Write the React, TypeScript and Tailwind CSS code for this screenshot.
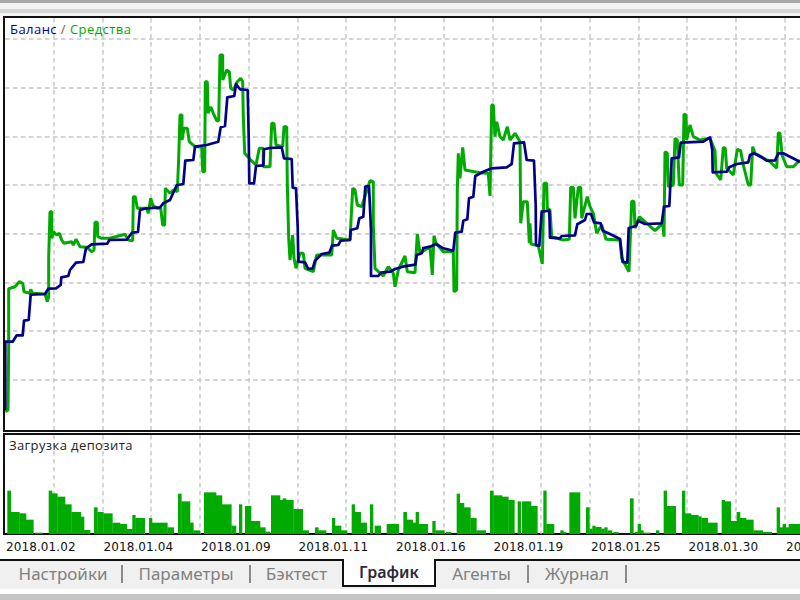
const hLines = [39, 88, 137, 185, 234, 283, 331, 380];
const vLines = [54, 103, 151, 200, 249, 298, 346, 395, 444, 493, 541, 590, 639, 687, 736, 785];

type Seg = [number, number, number[]];
// zoom-crop coordinates (3x) with their crop offset
const blueSegs: Seg[] = [
  [0, 190, [16,660,16,455,38,455,50,436,68,436,72,392,86,390,92,314,135,312,145,296,168,295,182,285,184,262,205,258,210,240,228,218,250,216,258,175,275,163,322,161,328,150,380,149,396,128,414,126,420,60,440,55,480,52,490,40,510,30]],
  [0, 0, [530,556,550,552,556,482,580,480,585,440,620,435,655,425,662,382,675,378,682,292,703,288,708,252,720,268,743,270,746,410,748,550,762,550,768,498,790,496,792,448]],
  [270, 90, [0,174,35,172,42,205,65,207,68,293,78,295,83,410,85,515,105,517,115,537,128,535,135,512,155,492,178,488,186,467,205,465,212,452,240,450,242,420,262,415,268,385,280,380,286,290,297,288,303,420,303,558,325,558,333,548,360,545,375,537,398,530,436,524,440,495,455,490,460,474,480,470,498,462,520,475,550,482,556,428,575,425,580,392,592,388,597,325,610,320,616,258,640,245,665,235,710,232,725,222,732,160,762,157,770,210,792,212,797,345,798,465]],
  [530, 90, [28,467,35,365,58,362,60,443,90,445,95,438,135,436,142,403,165,390,170,372,183,372,192,397,212,400,218,422,240,432,270,447,278,516,292,518,296,414,318,408,325,392,345,402,395,400,402,350,418,348,425,205,447,202,452,158,520,155,540,142,547,180,548,247,590,245,598,232,620,222,655,217,660,195,672,190,700,205,710,212,735,211,745,190,760,190,780,200,795,208,810,216]],
];
const greenSegs: Seg[] = [
  [0, 190, [16,665,24,660,26,470,26,296,45,290,58,275,68,280,72,305,90,310,92,298,98,310,135,312,142,335,146,320,146,200,150,65,155,65,155,145,160,125,170,135,178,130,185,150,192,160,215,155,220,165,228,148,240,170,260,172,275,185,282,180,285,97,292,97,293,140,305,145,330,145,375,133,385,150,398,152,400,20,406,20,412,55,440,55,445,70,452,25,458,45,470,55,482,55,488,105,494,105,496,0]],
  [0, 0, [496,565,510,580,520,570,532,575,536,475,540,345,546,345,546,420,552,385,562,385,568,425,585,440,605,440,608,515,614,515,616,245,622,245,624,340,632,320,640,340,650,362,656,362,660,165,668,165,668,240,680,210,688,215,692,265,700,270,712,245,722,235,728,245,730,350,734,460,750,478,768,495,778,445,790,445,790,500,800,500]],
  [270, 90, [0,230,5,100,12,100,18,165,38,170,42,110,50,110,52,280,56,445,60,510,68,435,72,505,78,535,90,490,100,490,105,535,130,545,140,495,185,495,190,420,200,445,240,450,248,295,255,300,262,345,275,350,300,272,310,275,310,405,315,535,340,558,355,530,370,550,375,590,385,540,405,498,412,545,435,548,442,432,450,490,480,470,487,555,492,437,498,460,520,485,550,485,552,605,560,600,562,300,565,190,570,265,578,172,585,240,630,248,655,250,660,318,665,45,670,45,675,140,680,95,690,140,700,150,712,110,720,150,735,130,750,155,752,400,760,335,772,335,778,460]],
  [530, 90, [0,400,3,462,25,467,37,522,42,280,50,280,52,355,60,360,65,440,100,450,118,448,122,292,130,292,135,385,145,292,152,292,155,385,172,320,180,350,190,370,200,430,215,405,228,448,270,450,275,505,297,545,305,333,312,335,315,415,328,380,375,422,398,400,402,440,405,185,412,190,415,290,430,285,435,145,442,150,448,285,458,285,462,72,468,75,470,150,480,105,490,140,510,150,540,145,555,182,558,250,572,270,580,172,586,175,590,235,610,255,622,178,632,182,640,225,655,285,662,285,668,170,675,190,720,215,740,235,745,128,750,130,756,195,770,230,790,230,810,210]],
];
const toPoints = (segs: Seg[]) =>
  segs
    .map(([ox, oy, p]) => {
      const out: string[] = [];
      for (let i = 0; i < p.length; i += 2) out.push(`${(ox + p[i] / 3).toFixed(1)},${(oy + p[i + 1] / 3).toFixed(1)}`);
      return out.join(" ");
    })
    .join(" ");

type Bars = [number, number[]];
const barSets: Bars[] = [
  [0, [22,32,212,32,58,276,58,78,280,78,100,299,105,128,338,146,156,212,156,172,220,172,195,230,195,214,253,214,242,276,242,252,290,252,270,330,282,292,262,292,310,276,310,337,280,337,360,308,360,380,312,380,397,327,397,406,285,406,434,294,447,456,294,456,502,308,502,521,322,534,544,221,544,570,244,570,580,308,580,600,331,612,648,217,648,666,226,666,694,253,694,708,317,717,726,253,735,753,258,753,780,303,780,796,322,796,810,335]],
  [270, [3,30,226,30,38,240,38,48,235,48,70,240,70,98,267,98,116,331,135,145,322,145,168,331,186,195,294,195,213,317,213,231,331,245,254,253,254,272,276,272,290,308,300,309,253,314,332,317,350,386,312,400,410,276,410,428,299,428,437,308,437,446,276,446,473,312,487,496,303,496,523,331,528,543,336,560,569,221,569,582,249,582,601,262,601,619,294,619,647,331,660,670,212,670,696,226,696,715,230,715,733,240,743,752,244,756,783,244]],
  [530, [0,22,258,40,49,212,49,72,312,91,100,331,100,108,336,118,150,217,168,178,262,178,187,326,187,196,317,196,214,321,214,223,326,223,232,322,232,246,331,250,265,336,300,310,235,314,323,336,323,332,312,332,340,331,340,360,338,378,387,331,401,410,212,410,437,258,456,465,212,465,483,280,483,505,285,505,514,289,514,533,294,533,562,308,575,584,240,584,602,244,602,620,303,620,630,276,630,648,294,648,670,299,670,698,331,698,725,336,740,749,262,749,758,322,758,767,312,767,776,322,776,810,312]],
];
const bars: { x: number; w: number; y: number }[] = [];
barSets.forEach(([ox, p]) => {
  for (let i = 0; i < p.length; i += 3) {
    bars.push({ x: ox + p[i] / 3, w: (p[i + 1] - p[i]) / 3 + 0.3, y: 420 + p[i + 2] / 3 });
  }
});

const dates = ["2018.01.02", "2018.01.04", "2018.01.09", "2018.01.11", "2018.01.16", "2018.01.19", "2018.01.25", "2018.01.30", "2018.02.01"];

function Tab({ label, width, active }: { label: string; width: string; active?: boolean }) {
  return (
    <div
      className={
        active
          ? `${width} h-[28px] -mt-[2px] flex items-center justify-center bg-white border-l-2 border-r-2 border-b-2 border-[#111111] text-[#2a2a3a] font-semibold text-[16px] shrink-0`
          : `${width} h-[26px] flex items-center justify-center text-[#808080] text-[17px] shrink-0`
      }
    >
      {label}
    </div>
  );
}
const Sep = () => <div className="w-[2px] h-[18px] bg-[#8a8a8a] shrink-0" />;

export default function App() {
  const sans = { fontFamily: '"Noto Sans", sans-serif' };
  return (
    <div className="w-[800px] h-[600px] bg-white overflow-hidden flex flex-col">
      <div className="h-[3px] bg-[#a8a8a8]" />
      <div className="h-[6px] bg-[#f2f2f2]" />
      <div className="h-[4px] bg-[#d6d6d6]" />
      <div className="h-[3px] bg-[#f4f4f4]" />

      <div className="ml-[3px] border-l-2 border-t-2 border-b-2 border-[#111111] h-[416px] relative bg-white">
        <svg width="795" height="412" viewBox="5 18 795 412" className="block">
          {hLines.map((y) => (
            <line key={y} x1="5" x2="800" y1={y} y2={y} stroke="#c6c6c6" strokeWidth="1.4" strokeDasharray="4.5 3.5" />
          ))}
          {vLines.map((x) => (
            <line key={x} x1={x} x2={x} y1="18" y2="430" stroke="#c6c6c6" strokeWidth="1.4" strokeDasharray="4.5 3.5" />
          ))}
          <polyline points={toPoints(greenSegs)} fill="none" stroke="#00aa00" strokeWidth="3" strokeLinejoin="bevel" />
          <polyline points={toPoints(blueSegs)} fill="none" stroke="#00008b" strokeWidth="2.7" strokeLinejoin="round" />
        </svg>
        <div className="absolute left-[5px] top-[3px] text-[13px] leading-[16px] tracking-[0.45px]" style={{ fontFamily: '"Open Sans", sans-serif' }}>
          <span className="text-[#00008b]">Баланс</span>
          <span className="text-[#8b4a4a]"> / </span>
          <span className="text-[#00aa00]">Средства</span>
        </div>
      </div>

      <div className="h-[1px] bg-white" />

      <div className="ml-[3px] border-l-2 border-t-2 border-b-2 border-[#111111] h-[102px] relative bg-white">
        <svg width="795" height="99" viewBox="5 435 795 99" className="block">
          {vLines.map((x) => (
            <line key={x} x1={x} x2={x} y1="435" y2="534" stroke="#c6c6c6" strokeWidth="1.4" strokeDasharray="4.5 3.5" />
          ))}
          {bars.map((b, i) => (
            <rect key={i} x={b.x} y={b.y} width={b.w} height={534 - b.y} fill="#00aa00" />
          ))}
        </svg>
        <div className="absolute left-[4px] top-[3px] text-[13px] leading-[15px] tracking-[0.4px] text-[#222222]" style={{ fontFamily: '"Open Sans", sans-serif' }}>
          Загрузка депозита
        </div>
      </div>

      <div className="h-[24px] flex pl-[6px] items-center bg-white relative">
        {dates.map((d) => (
          <div key={d} className="w-[97.5px] shrink-0 text-[12px] tracking-[0.1px] text-[#111111] whitespace-nowrap" style={{ fontFamily: '"DejaVu Sans", sans-serif' }}>
            {d}
          </div>
        ))}
      </div>

      <div className="h-[2px] bg-[#111111]" />
      <div className="h-[28px] bg-[#f0f0f0] flex items-start" style={sans}>
        <div className="w-[5px] shrink-0" />
        <Tab label="Настройки" width="w-[116px]" />
        <div className="mt-[4px]"><Sep /></div>
        <Tab label="Параметры" width="w-[126px]" />
        <div className="mt-[4px]"><Sep /></div>
        <Tab label="Бэктест" width="w-[91px]" />
        <Tab label="График" width="w-[94px]" active />
        <Tab label="Агенты" width="w-[91px]" />
        <div className="mt-[4px]"><Sep /></div>
        <Tab label="Журнал" width="w-[96px]" />
        <div className="mt-[4px]"><Sep /></div>
      </div>
      <div className="h-[5px] bg-white" />
      <div className="flex-1 bg-[#c4c4c4]" />
    </div>
  );
}
